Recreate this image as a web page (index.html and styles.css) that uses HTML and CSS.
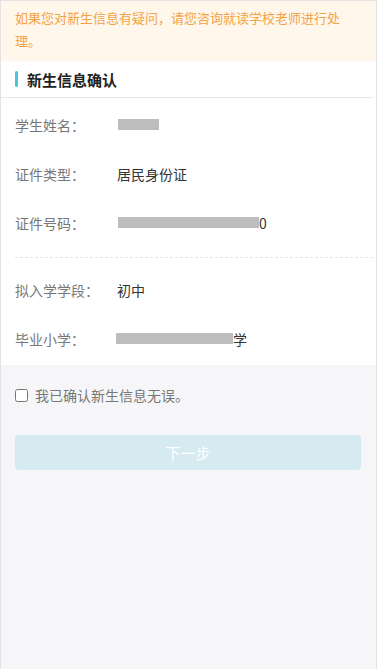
FILE: index.html
```html
<!DOCTYPE html>
<html lang="zh-CN">

<head>
  <meta charset="UTF-8">
  <meta name="viewport" content="width=device-width, initial-scale=1.0">
  <title>新生信息确认</title>
  <link rel="stylesheet" href="styles.css">
</head>

<body>
  <div class="page">
    <div class="notice">如果您对新生信息有疑问，请您咨询就读学校老师进行处理。</div>

    <div class="card">
      <div class="card-title"><span class="bar"></span>新生信息确认</div>
      <div class="rows">
        <div class="row">
          <span class="label">学生姓名：</span>
          <span class="value"><span class="mask mask-name"></span></span>
        </div>
        <div class="row">
          <span class="label">证件类型：</span>
          <span class="value">居民身份证</span>
        </div>
        <div class="row">
          <span class="label">证件号码：</span>
          <span class="value"><span class="mask mask-id"></span>0</span>
        </div>
      </div>
      <div class="rows rows-dashed">
        <div class="row">
          <span class="label">拟入学学段：</span>
          <span class="value">初中</span>
        </div>
        <div class="row">
          <span class="label">毕业小学：</span>
          <span class="value"><span class="mask mask-school"></span>学</span>
        </div>
      </div>
    </div>

    <label class="confirm">
      <input type="checkbox">
      <span>我已确认新生信息无误。</span>
    </label>

    <div class="actions">
      <button class="next" disabled>下一步</button>
    </div>
  </div>
</body>

</html>
```

FILE: styles.css
```css
html,
body {
  margin: 0;
  padding: 0;
  height: 100%;
}

body {
  font-family: "Noto Sans CJK SC", "Noto Sans", sans-serif;
  font-size: 14px;
  background: #fff;
}

.page {
  box-sizing: border-box;
  width: 377px;
  min-height: 669px;
  border: 1px solid #e3e3e3;
  border-bottom: 0;
  background: #f6f6f8;
}

.notice {
  background: #fff7eb;
  color: #f3a345;
  font-size: 13px;
  padding: 5px 14px 9px;
  line-height: 23px;
}

.card {
  background: #fff;
  padding-bottom: 2px;
}

.card-title {
  display: flex;
  align-items: center;
  height: 36px;
  padding-left: 14px;
  margin-right: 3px;
  border-bottom: 1px solid #e8e8e8;
  font-size: 15px;
  font-weight: bold;
  color: #222;
}

.bar {
  width: 3px;
  height: 16px;
  border-radius: 2px;
  background: #4fc3dc;
  margin-right: 9px;
}

.rows {
  padding: 2px 3px 10px 14px;
}

.rows-dashed {
  border-top: 1px dashed #e6e6e6;
  margin-left: 14px;
  margin-right: 3px;
  padding: 7px 0 0;
}

.row {
  display: flex;
  align-items: center;
  height: 49px;
}

.label {
  width: 102px;
  color: #777;
}

.value {
  color: #333;
  display: flex;
  align-items: center;
}

.mask {
  display: inline-block;
  background: #bdbdbd;
  height: 11px;
}

.mask-name {
  width: 41px;
  margin-left: 1px;
}

.mask-id {
  width: 141px;
  margin-left: 1px;
}

.mask-school {
  width: 117px;
  margin-left: -1px;
}

.confirm {
  display: flex;
  align-items: center;
  padding: 20px 14px 0;
  color: #777;
}

.confirm input {
  width: 13px;
  height: 13px;
  margin: 0 7px 0 0;
}

.actions {
  padding: 30px 15px 0 14px;
}

.next {
  display: block;
  width: 100%;
  height: 35px;
  border: 0;
  border-radius: 4px;
  background: #d6eaf1;
  color: #fff;
  font-family: inherit;
  font-size: 15px;
}
```
